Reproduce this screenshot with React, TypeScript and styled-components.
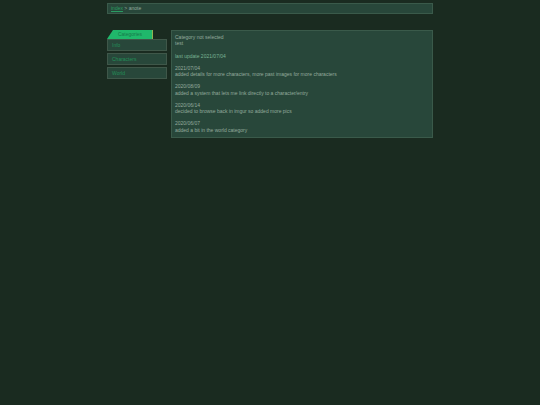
import styled, { createGlobalStyle } from "styled-components";

const GlobalStyle = createGlobalStyle`
  html, body {
    margin: 0;
    padding: 0;
    background: #1a2b20;
  }
  body {
    font-family: "Liberation Sans", Arial, sans-serif;
    font-size: 5px;
    line-height: 6.17px;
    color: #94ab9d;
  }
`;

const Page = styled.div`
  width: 326px;
  margin-left: 107px;
  padding-top: 3px;
`;

const Breadcrumb = styled.div`
  box-sizing: border-box;
  height: 11px;
  padding: 1px 3px;
  background: #28473a;
  border: 1px solid #3a5a4a;
`;

const Crumb = styled.a`
  color: #2a9c62;
  text-decoration: underline;
`;

const Columns = styled.div`
  display: flex;
  align-items: flex-start;
  gap: 4px;
  margin-top: 16px;
`;

const Sidebar = styled.nav`
  width: 60px;
  flex: none;
`;

const Tab = styled.div`
  box-sizing: border-box;
  width: 46px;
  height: 9px;
  padding: 1.2px 0 0 1px;
  text-align: center;
  color: #17784a;
  background: #20b86b;
  border-right: 1px solid #8fb352;
  clip-path: polygon(6px 0, 100% 0, 100% 100%, 0 100%);
`;

const MenuList = styled.div`
  display: flex;
  flex-direction: column;
  gap: 2px;
`;

const MenuItem = styled.a`
  box-sizing: border-box;
  display: block;
  height: 12px;
  padding: 1.5px 4px;
  color: #238f59;
  background: #28473a;
  border: 1px solid #3f5749;
`;

const Content = styled.main`
  box-sizing: border-box;
  flex: 1;
  height: 108px;
  padding: 3px;
  background: #28473a;
  border: 1px solid #3a5a4a;
`;

const Line = styled.div<{ $accent?: boolean }>`
  min-height: 6.17px;
  color: ${(p) => (p.$accent ? "#78b393" : "#94ab9d")};
`;

const Block = styled.div`
  margin-bottom: 6.17px;
`;

const log = [
  ["2021/07/04", "added details for more characters, more past images for more characters"],
  ["2020/08/09", "added a system that lets me link directly to a character/entry"],
  ["2020/06/14", "decided to browse back in imgur so added more pics"],
  ["2020/06/07", "added a bit in the world category"],
];

export default function App() {
  return (
    <>
      <GlobalStyle />
      <Page>
        <Breadcrumb>
          <Crumb href="#">index</Crumb> &gt; anote
        </Breadcrumb>
        <Columns>
          <Sidebar>
            <Tab>Categories</Tab>
            <MenuList>
              <MenuItem>Info</MenuItem>
              <MenuItem>Characters</MenuItem>
              <MenuItem>World</MenuItem>
            </MenuList>
          </Sidebar>
          <Content>
            <Block>
              <Line>Category not selected</Line>
              <Line>test</Line>
            </Block>
            <Block>
              <Line $accent>last update 2021/07/04</Line>
            </Block>
            {log.map(([date, text]) => (
              <Block key={date}>
                <Line>{date}</Line>
                <Line>{text}</Line>
              </Block>
            ))}
          </Content>
        </Columns>
      </Page>
    </>
  );
}
